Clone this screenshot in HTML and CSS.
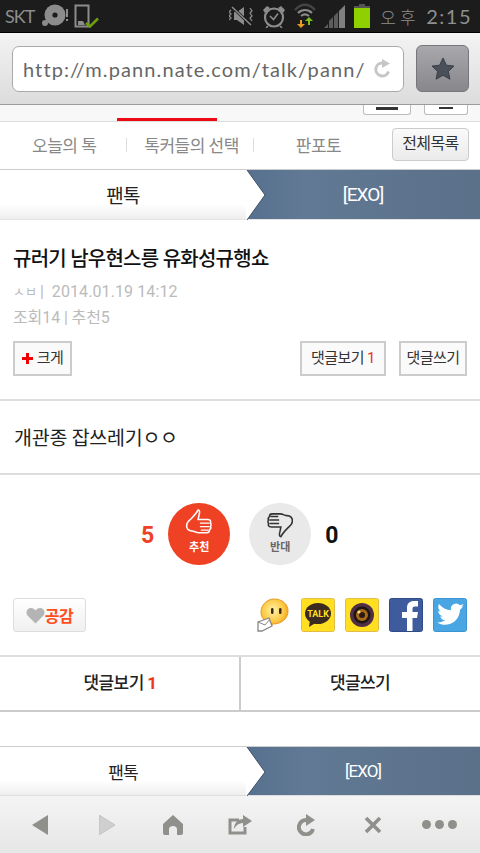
FILE: index.html
```html
<!DOCTYPE html>
<html lang="ko">
<head>
<meta charset="utf-8">
<title>팬톡</title>
<link rel="stylesheet" href="styles.css">
</head>
<body>
<div class="status">
  <div class="status-left">
    <span class="carrier">SKT</span>
    <svg class="ic" width="28" height="24" viewBox="0 0 28 24"><circle cx="14" cy="11" r="10.500" fill="#8c8c8c"/><circle cx="14" cy="11" r="2.600" fill="#1c1c1c"/><circle cx="4" cy="19" r="3" fill="#8c8c8c"/><rect x="25" y="5" width="2" height="8" fill="#8c8c8c"/><rect x="25" y="15" width="2" height="2" fill="#8c8c8c"/></svg>
    <svg class="ic" width="26" height="24" viewBox="0 0 26 24"><path d="M1.500 1.500h13v21h-13z" fill="none" stroke="#8c8c8c" stroke-width="2"/><path d="M4 17h5l2 4H4z" fill="#8c8c8c"/><path d="M12 19l4 3.500 8-8" fill="none" stroke="#6ea00c" stroke-width="2.500"/></svg>
  </div>
  <div class="status-right">
    <svg width="25" height="20" viewBox="0 0 25 20"><path d="M8 6l7-5v18l-7-5H5V6z" fill="#8c8c8c"/><path d="M3 1l19 18" stroke="#1c1c1c" stroke-width="3"/><path d="M3 1l19 18" stroke="#8c8c8c" stroke-width="1.500"/><path d="M2 4l-2 2 2 2-2 2 2 2-2 2M21 2l2 3-2 2 2 3-2 2 2 3" fill="none" stroke="#8c8c8c" stroke-width="1.300"/></svg>
    <svg width="24" height="24" viewBox="0 0 24 24"><circle cx="12" cy="13.500" r="9" fill="none" stroke="#8c8c8c" stroke-width="2.200"/><path d="M8 12l3.500 3.500 4.500-6" fill="none" stroke="#8c8c8c" stroke-width="1.600"/><path d="M1 6l4-4 3 2-5 5zM23 6l-4-4-3 2 5 5z" fill="#8c8c8c"/><path d="M6 22l-2 2M18 22l2 2" stroke="#8c8c8c" stroke-width="1.600"/></svg>
    <svg width="22" height="25" viewBox="0 0 22 25"><path d="M1 7c6-7 14-7 20 0" fill="none" stroke="#444" stroke-width="2.500"/><path d="M4 10c4-4 10-4 14 0" fill="none" stroke="#8c8c8c" stroke-width="2.200"/><path d="M7 13c2.500-2 5.500-2 8 0" fill="none" stroke="#8c8c8c" stroke-width="2"/><path d="M6 17v4H3l4 4 4-4H8v-4z" fill="#e89a24"/><path d="M14 22v-4h-3l4-4 4 4h-3v4z" fill="#7fbf1a"/></svg>
    <svg width="22" height="24" viewBox="0 0 22 24"><path d="M0 24l4-4v4zM5 24v-7l4-4v11zM10 24V12l4-4v16z" fill="#5c5c5c"/><path d="M15 24V7l6-6v23z" fill="#808080"/></svg>
    <div class="battery"><i></i><b></b></div>
    <span class="clock"><span class="ampm">오후</span> 2:15</span>
  </div>
</div>

<div class="urlbar">
  <div class="url">
    <span class="url-text">http://m.pann.nate.com/talk/pann/</span>
    <svg width="20" height="20" viewBox="0 0 20 20"><path d="M15.500 12.500A6.500 6.500 0 1 1 10 4" fill="none" stroke="#c6c6c6" stroke-width="3"/><path d="M9 0l8 4.500-8 4.500z" fill="#c6c6c6"/></svg>
  </div>
  <div class="fav">
    <svg width="26" height="26" viewBox="0 0 26 26"><path d="M13 2l3.400 7.200 7.600.9-5.600 5.300 1.500 7.800L13 19.300 6.100 23.200l1.500-7.800L2 10.100l7.600-.9z" fill="#4a505a" stroke="#3a3e46" stroke-width="1"/></svg>
  </div>
</div>

<div class="clipped">
  <div class="clip-active"></div>
  <div class="clip-btns"><span class="clip-btn a"><i></i></span><span class="clip-btn b"><i></i></span></div>
</div>

<nav class="tabs">
  <a class="tab t1">오늘의 톡</a><span class="sep"></span>
  <a class="tab t2">톡커들의 선택</a><span class="sep"></span>
  <a class="tab t3">판포토</a>
  <a class="all">전체목록</a>
</nav>

<div class="crumb">
  <div class="crumb-l"><span>팬톡</span></div>
  <svg class="crumb-arrow" width="21" height="50" viewBox="0 0 21 50" preserveAspectRatio="none"><path d="M0 0h1l18 25L1 50H0z" fill="#fff"/><path d="M1 0l18 25L1 50" fill="none" stroke="#3f5169" stroke-width="1"/></svg>
  <div class="crumb-r"><span>[EXO]</span></div>
</div>

<article class="head">
  <h1 class="title">규러기 남우현스릉 유화성규행쇼</h1>
  <p class="meta meta1"><span class="auth">ㅅㅂ</span><span>|</span><span class="date">2014.01.19 14:12</span></p>
  <p class="meta meta2">조회14 | 추천5</p>
  <div class="tools">
    <a class="tbtn big"><svg width="11" height="11" viewBox="0 0 11 11"><path d="M4 0h3v4h4v3H7v4H4V7H0V4h4z" fill="#f00000"/></svg>크게</a>
    <a class="tbtn view">댓글보기 <em>1</em></a>
    <a class="tbtn write">댓글쓰기</a>
  </div>
</article>

<div class="body">개관종 잡쓰레기ㅇㅇ</div>

<section class="vote">
  <span class="num red">5</span>
  <div class="circle up">
    <svg width="28" height="29" viewBox="0 0 32 33"><path d="M15 1c2 0 2 3 1 6l-1 5h11c3 0 4 2 3 4 1 1 1 3 0 4 1 1 0 3-1 4 0 2-1 3-3 3H16c-4 0-5-2-8-2-4 0-7-3-6-7 0-3 3-5 5-7 3-3 6-6 8-10z" fill="none" stroke="#fff" stroke-width="1.800"/><path d="M17 16h11M17 20h11M18 24h9" stroke="#fff" stroke-width="1.500"/></svg>
    <span>추천</span>
  </div>
  <div class="circle down">
    <svg width="28" height="29" viewBox="0 0 32 32"><path d="M17 31c-2 0-2-3-1-6l1-5H6c-3 0-4-2-3-4-1-1-1-3 0-4-1-1 0-3 1-4 0-2 1-3 3-3h9c4 0 5 2 8 2 4 0 7 3 6 7 0 3-3 5-5 7-3 3-6 6-8 10z" fill="none" stroke="#333" stroke-width="1.800"/><path d="M15 16H4M15 12H4M14 8H5" stroke="#333" stroke-width="1.500"/></svg>
    <span>반대</span>
  </div>
  <span class="num">0</span>
</section>

<section class="social">
  <a class="like"><svg width="19" height="17" viewBox="0 0 19 17"><path d="M9.500 16.500L1.500 8.500C-1 5 1.500 1 5 1c2 0 3.500 1 4.500 2.500C10.500 2 12 1 14 1c3.500 0 6 4 3.500 7.500z" fill="#b4b4b4"/></svg><span>공감</span></a>
  <div class="share">
    <svg class="sb" width="34" height="34" viewBox="0 0 34 34"><defs><radialGradient id="bub" cx="45%" cy="40%" r="65%"><stop offset="0" stop-color="#fff3a8"/><stop offset=".65" stop-color="#fdc63e"/><stop offset="1" stop-color="#e88f10"/></radialGradient></defs><path d="M17 1c8 0 14 5 14 12 0 8-7 13-15 13-2 1-5 3-8 3 2-2 2-4 2-5-4-2-6-6-6-10C4 7 10 1 17 1z" fill="url(#bub)" stroke="#e59a22"/><rect x="14" y="10" width="2.500" height="6" rx="1.200" fill="#3a2a10"/><rect x="22" y="10" width="2.500" height="6" rx="1.200" fill="#3a2a10"/><path d="M1 24l11-4 3 8-10 5H1z" fill="#fff" stroke="#888" stroke-width="1.300"/><path d="M1 24l7 3 5-6" fill="none" stroke="#888"/></svg>
    <svg class="sb" width="34" height="34" viewBox="0 0 34 34"><rect x=".5" y=".5" width="33" height="33" rx="2" fill="#ffdf1f" stroke="#e2bc49"/><ellipse cx="17" cy="15.500" rx="13" ry="10.500" fill="#3b2a1f"/><path d="M9 22l-1 7 8-5z" fill="#3b2a1f"/><text x="17" y="19" class="talk">TALK</text></svg>
    <svg class="sb" width="34" height="34" viewBox="0 0 34 34"><rect x=".5" y=".5" width="33" height="33" rx="2" fill="#ffdf1f" stroke="#e2bc49"/><circle cx="17" cy="17" r="12" fill="#4f2e46"/><circle cx="17" cy="17" r="8.500" fill="#1c1510"/><circle cx="17" cy="17" r="6" fill="#a86a1a"/><circle cx="17" cy="17" r="3" fill="#2a1a10"/><circle cx="14" cy="14" r="1.600" fill="#ffd98a"/></svg>
    <svg class="sb" width="34" height="34" viewBox="0 0 34 34"><rect x=".5" y=".5" width="33" height="33" rx="2" fill="#3e5c9d" stroke="#2f4a85"/><path d="M18 33V20h-5v-6h5v-4c0-5 3-7 7-7h4v5.500h-3c-1.700 0-2.500.8-2.500 2.500v3H29l-1 6h-4.500v13z" fill="#fff"/></svg>
    <svg class="sb" width="34" height="34" viewBox="0 0 34 34"><rect x=".5" y=".5" width="33" height="33" rx="2" fill="#4aa5e3" stroke="#3c93d2"/><path d="M31 8c-1 .5-2 .8-3 1 1-.6 2-1.800 2.400-3-1 .6-2.200 1-3.400 1.300A5.300 5.300 0 0 0 18 12.200C13.500 12 9 9.700 6 6c-1.500 2.700-.8 5.800 1.700 7.500-1 0-1.800-.3-2.500-.7 0 2.700 1.900 5 4.400 5.500-.8.200-1.600.200-2.400.100.700 2.200 2.700 3.700 5 3.700-2.300 1.800-5.200 2.600-8 2.300 7.700 5 20 2 22.500-10 .2-.9.300-1.800.3-2.700 1-.8 2.400-2 3-3.700z" fill="#fff"/></svg>
  </div>
</section>

<div class="actions">
  <a class="act">댓글보기 <em>1</em></a>
  <a class="act">댓글쓰기</a>
</div>

<div class="crumb crumb2">
  <div class="crumb-l"><span>팬톡</span></div>
  <svg class="crumb-arrow" width="21" height="49" viewBox="0 0 21 49" preserveAspectRatio="none"><path d="M0 0h1l18 25L1 49H0z" fill="#fff"/><path d="M1 0l18 25L1 49" fill="none" stroke="#3f5169" stroke-width="1"/></svg>
  <div class="crumb-r"><span>[EXO]</span></div>
</div>

<footer class="toolbar">
  <svg width="16" height="20" viewBox="0 0 16 20"><path d="M16 0v20L0 10z" fill="#8f8f8b"/></svg>
  <svg width="16" height="20" viewBox="0 0 16 20"><path d="M0 0v20l16-10z" fill="#cfcfcf" stroke="#bdbdbd" stroke-width=".8"/></svg>
  <svg width="20" height="20" viewBox="0 0 20 20"><path d="M10 0l10 9v9a2 2 0 0 1-2 2h-4v-6c0-2-2-3-4-3s-4 1-4 3v6H2a2 2 0 0 1-2-2V9z" fill="#8f8f8b"/></svg>
  <svg width="24" height="20" viewBox="0 0 24 20"><path d="M17 12v6H2V5h9" fill="none" stroke="#8f8f8b" stroke-width="3"/><path d="M15 0l9 6-9 6V8c-4 0-7 2-9 6 0-6 4-10 9-10z" fill="#8f8f8b"/></svg>
  <svg width="19" height="22" viewBox="0 0 19 22"><path d="M16 15A7.200 7.200 0 1 1 9.500 6" fill="none" stroke="#8f8f8b" stroke-width="4"/><path d="M9 0l9 6-9 6z" fill="#8f8f8b"/></svg>
  <svg width="18" height="18" viewBox="0 0 18 18"><path d="M2 2l14 14M16 2L2 16" stroke="#8f8f8b" stroke-width="3.600"/></svg>
  <div class="dots"><i></i><i></i><i></i></div>
</footer>
</body>
</html>
```

FILE: styles.css
```css
* { box-sizing: border-box; }
html, body { margin: 0; padding: 0; }
body {
  width: 480px;
  height: 853px;
  overflow: hidden;
  background: #fff;
  font-family: "Roboto", "Noto Sans CJK KR", sans-serif;
  color: #222;
}
a { display: block; }
p, h1 { margin: 0; }
em { font-style: normal; color: #f0321e; }

.status {
  height: 33px;
  background: #1c1c1c;
  border-bottom: 1px solid #000;
  display: flex;
  justify-content: space-between;
  align-items: center;
  padding: 0 8px 1px 5px;
  color: #8c8c8c;
}
.status-left { display: flex; align-items: center; gap: 0; }
.carrier { font: 400 18px/1 "Lato", sans-serif; letter-spacing: -1px; width: 36px; }
.ic { flex: none; }
.status-left .ic + .ic { margin-left: 5px; }
.status-right { display: flex; align-items: center; gap: 8px; }
.battery { width: 16px; height: 24px; display: flex; flex-direction: column; align-items: center; }
.battery i { width: 6px; height: 2px; background: #555; }
.battery b { width: 16px; height: 22px; background: #8fd000; border-top: 2px solid #555; }
.clock { font: 400 20px/1 "Lato", sans-serif; letter-spacing: 1.500px; color: #8f8f8f; margin-left: 2px; white-space: nowrap; }
.ampm { font-family: "Noto Sans CJK KR", sans-serif; font-weight: 300; font-size: 17px; letter-spacing: 4px; }

.urlbar {
  height: 72px;
  background: linear-gradient(#f3f3f3, #dcdcdc);
  border-bottom: 1px solid #9a9a9a;
  display: flex;
  align-items: center;
  padding: 0 11px 0 12px;
  gap: 12px;
}
.url {
  width: 393px;
  height: 46px;
  background: #fff;
  border: 1px solid #aaa;
  border-radius: 7px;
  display: flex;
  align-items: center;
  justify-content: space-between;
  padding: 0 10px;
}
.url-text { font: 400 20px/1 "Lato", sans-serif; color: #666; letter-spacing: 1.100px; white-space: nowrap; }
.fav {
  width: 53px;
  height: 47px;
  border: 1px solid #777;
  border-radius: 6px;
  background: linear-gradient(#a8a8ac, #87878c);
  display: flex;
  align-items: center;
  justify-content: center;
}

.clipped {
  position: relative;
  height: 17px;
  background: #f8f8f8;
  border-bottom: 1px solid #ddd;
  display: flex;
  justify-content: flex-end;
  padding-right: 12px;
}
.clip-active { position: absolute; left: 117px; bottom: 0; width: 100px; height: 3px; background: #ee0a14; }
.clip-btns { display: flex; gap: 13px; height: 10px; }
.clip-btn {
  height: 10px;
  border: 1px solid #bbb;
  border-top: 0;
  border-radius: 0 0 3px 3px;
  background: #fff;
  display: flex;
  justify-content: center;
}
.clip-btn i { display: block; background: #333; height: 3px; }
.clip-btn.a { width: 48px; }
.clip-btn.a i { width: 22px; margin-top: 2px; }
.clip-btn.b { width: 44px; }
.clip-btn.b i { width: 14px; height: 2px; margin-top: 2px; }

.tabs {
  height: 48px;
  display: flex;
  align-items: center;
  padding: 0 11px 2px 32px;
  border-bottom: 1px solid #ccc;
  font-size: 17px;
  letter-spacing: -.5px;
  color: #888;
}
.tab { white-space: nowrap; }
.sep { width: 1px; height: 14px; background: #ddd; }
.t1 { margin-right: 30px; }
.t2 { margin: 0 14px 0 17px; }
.t3 { margin: 0 auto 0 42px; }
.all {
  width: 77px;
  height: 33px;
  border: 1px solid #ccc;
  border-radius: 4px;
  background: linear-gradient(#fafafa, #ebebeb);
  color: #333;
  font-size: 16px;
  letter-spacing: -.6px;
  line-height: 30px;
  text-align: center;
}

.crumb { height: 50px; display: flex; background: #5f7692; border-bottom: 1px solid #e4e4e4; }
.crumb-l {
  width: 246px;
  background: linear-gradient(#fff 70%, #eee);
  color: #222;
  font-size: 19px;
  letter-spacing: -.8px;
  display: flex;
  align-items: center;
  justify-content: center;
}
.crumb-arrow { flex: none; margin-right: -21px; position: relative; z-index: 1; }
.crumb-r {
  flex: 1;
  background: linear-gradient(90deg, #56708f, #617994 25%, #5b7089);
  color: #fff;
  font-size: 19px;
  letter-spacing: -1px;
  display: flex;
  align-items: center;
  justify-content: center;
}

.head { height: 181px; padding: 25px 13px 0 13px; border-bottom: 2px solid #ddd; }
.title { font-size: 20px; font-weight: 500; letter-spacing: -.75px; line-height: 28px; color: #111; }
.meta { color: #bbb; font-size: 16px; line-height: 20px; }
.meta1 { margin-top: 9px; display: flex; gap: 3px; }
.auth { font-size: 13px; letter-spacing: 0; }
.date { margin-left: 5px; letter-spacing: .1px; }
.meta2 { margin-top: 6px; letter-spacing: -.1px; }
.tools { display: flex; margin-top: 13px; }
.tbtn {
  height: 35px;
  border: 2px solid #ccc;
  background: #fafafa;
  color: #333;
  font-size: 15px;
  letter-spacing: -.6px;
  line-height: 31px;
  text-align: center;
  white-space: nowrap;
}
.big { width: 59px; display: flex; align-items: center; justify-content: center; gap: 4px; }
.view { width: 86px; margin-left: auto; }
.write { width: 68px; margin-left: 13px; }

.body { height: 74px; padding: 24px 14px 0; font-size: 19.500px; line-height: 28px; letter-spacing: -.25px; color: #222; border-bottom: 2px solid #ddd; }

.vote { height: 123px; padding-top: 28px; display: flex; align-items: flex-start; }
.num { font-size: 23px; font-weight: 700; line-height: 66px; color: #111; }
.num.red { color: #ef4123; margin-left: 141px; }
.circle {
  width: 62px;
  height: 62px;
  border-radius: 50%;
  display: flex;
  flex-direction: column;
  align-items: center;
  padding-top: 6px;
  font-size: 11px;
  font-weight: 700;
  line-height: 14px;
}
.circle svg { flex: none; margin-bottom: 3px; }
.circle.up { background: #ef4123; color: #fff; margin-left: 14px; }
.circle.down { background: #e9e9e9; color: #666; margin-left: 19px; margin-right: 14px; }

.social { height: 59px; padding: 0 13px; display: flex; justify-content: space-between; align-items: flex-start; border-bottom: 2px solid #ddd; }
.like {
  width: 73px;
  height: 34px;
  border: 1px solid #ddd;
  border-radius: 3px;
  background: linear-gradient(#fff, #f0f0f0);
  display: flex;
  align-items: center;
  justify-content: center;
  color: #ff4c1a;
  font-size: 16px;
  font-weight: 700;
  letter-spacing: -.5px;
}
.share { display: flex; gap: 10px; }
.sb { display: block; }
.talk { font: 700 9px "Roboto", sans-serif; fill: #ffdf1f; text-anchor: middle; }

.actions { height: 55px; display: flex; border-bottom: 2px solid #ccc; }
.act {
  width: 240px;
  text-align: center;
  line-height: 53px;
  font-size: 17px;
  font-weight: 500;
  letter-spacing: -.6px;
  color: #222;
}
.act + .act { border-left: 2px solid #ccc; margin-left: -1px; }
.act em { font-weight: 700; }

.crumb2 { margin-top: 34px; height: 50px; border-top: 1px solid #ccc; border-bottom: 1px solid #ddd; }
.crumb2 .crumb-l, .crumb2 .crumb-r { font-size: 17px; }

.toolbar {
  height: 57px;
  background: linear-gradient(#f4f4f4, #e6e6e6);
  display: grid;
  grid-template-columns: repeat(7, 1fr);
  justify-items: center;
  align-items: center;
  padding: 0 7px;
}
.dots { display: flex; gap: 4px; }
.dots i { width: 9px; height: 9px; border-radius: 50%; background: #8f8f8b; }
```
